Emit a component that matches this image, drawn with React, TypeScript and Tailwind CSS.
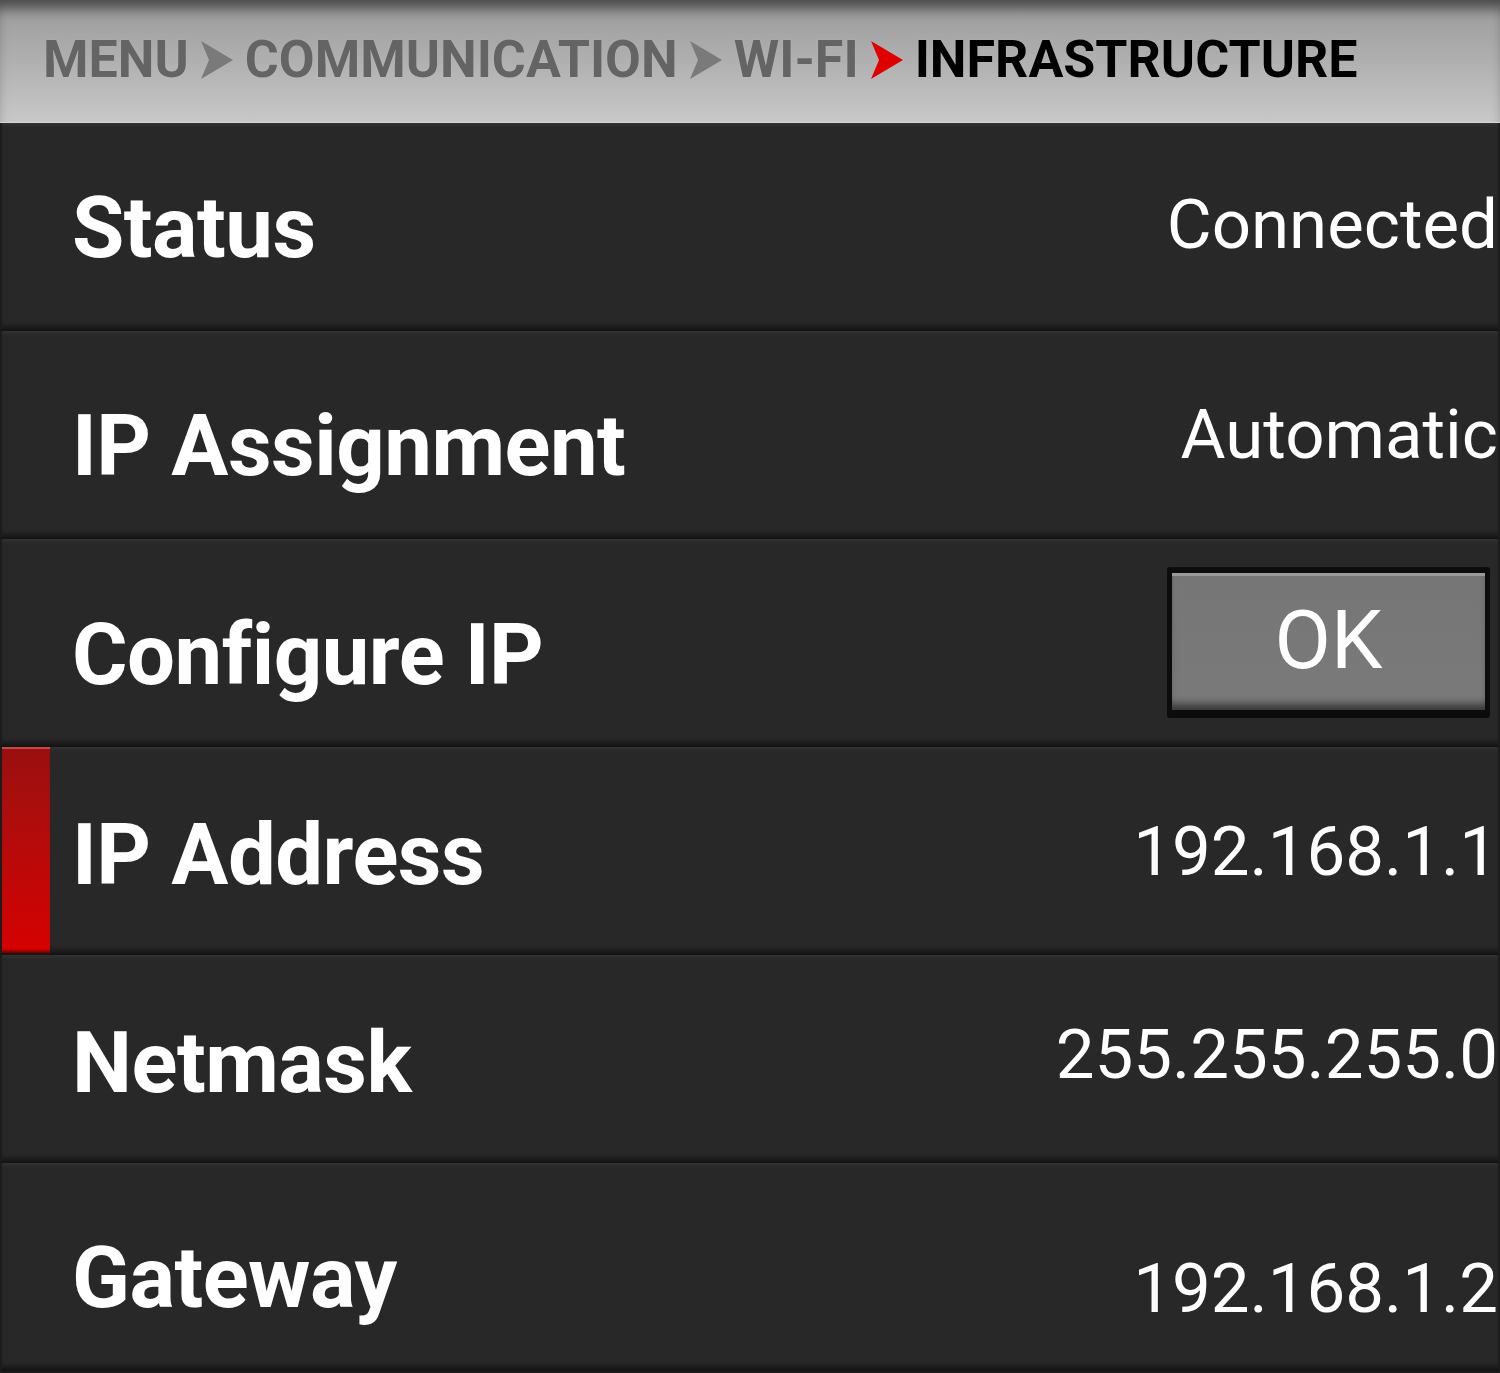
import React from 'react';

interface Row {
  label: string;
  value?: string;
  button?: string;
  selected?: boolean;
  labelShift: string;
  valueShift: string;
}

const rows: Row[] = [
  { label: 'Status', value: 'Connected', labelShift: 'translate-y-[2px]', valueShift: '-translate-y-[2px]' },
  { label: 'IP Assignment', value: 'Automatic', labelShift: 'translate-y-[12px]', valueShift: 'translate-y-[0px]' },
  { label: 'Configure IP', button: 'OK', labelShift: 'translate-y-[13px]', valueShift: 'translate-y-[0px]' },
  { label: 'IP Address', value: '192.168.1.1', selected: true, labelShift: 'translate-y-[5px]', valueShift: 'translate-y-[1px]' },
  { label: 'Netmask', value: '255.255.255.0', labelShift: 'translate-y-[5px]', valueShift: '-translate-y-[4px]' },
  { label: 'Gateway', value: '192.168.1.2', labelShift: 'translate-y-[12px]', valueShift: 'translate-y-[22px]' },
];

const Chevron: React.FC<{ color: string }> = ({ color }) => (
  <svg width="34" height="38" viewBox="0 0 34 38" className="shrink-0">
    <path d="M1 0 L33 19 L1 38 L9 19 Z" fill={color} />
  </svg>
);

const crumbText = "text-[52px] font-bold leading-none [text-shadow:0_0_1px_rgba(255,255,255,0.35)]";

const App: React.FC = () => {
  return (
    <div
      className="w-[1500px] h-[1373px] overflow-hidden bg-[#1a1a1a] flex flex-col"
      style={{ fontFamily: 'Roboto, "Liberation Sans", sans-serif' }}
    >
      {/* breadcrumb bar */}
      <div className="h-[123px] shrink-0 flex items-center gap-[11px] pl-[43px] pb-[2px] bg-gradient-to-b from-[#9a9a9a] via-[#b0b0b0] to-[#c8c8c8] shadow-[inset_0_14px_14px_-6px_rgba(0,0,0,0.55)] border-b border-[#d6d6d6]">
        <span className={`${crumbText} text-[#646464]`}>MENU</span>
        <Chevron color="#7a7a7a" />
        <span className={`${crumbText} text-[#646464]`}>COMMUNICATION</span>
        <Chevron color="#7a7a7a" />
        <span className={`${crumbText} text-[#646464]`}>WI-FI</span>
        <Chevron color="#e00000" />
        <span className={`${crumbText} text-black`}>INFRASTRUCTURE</span>
      </div>

      {/* settings list */}
      <div className="flex flex-col">
        {rows.map((row) => (
          <div
            key={row.label}
            className="h-[208px] shrink-0 flex items-stretch bg-[#282828] border-l-2 border-r-2 border-[#1c1c1c] border-b-2 border-b-[#151515] shadow-[inset_0_5px_4px_-3px_rgba(255,255,255,0.06),inset_0_-6px_5px_-3px_rgba(0,0,0,0.45)]"
          >
            {row.selected ? (
              <div className="w-[48px] shrink-0 bg-gradient-to-b from-[#9a0f0f] to-[#d60000] border-t-2 border-[#c24a4a] shadow-[inset_0_-4px_3px_-2px_rgba(0,0,0,0.5)]" />
            ) : (
              <div className="w-[48px] shrink-0" />
            )}
            <div className="flex-1 flex items-center justify-between pl-[22px] overflow-hidden">
              <span className={`text-[85px] font-bold leading-none text-white tracking-[-0.5px] ${row.labelShift}`}>
                {row.label}
              </span>
              {row.button ? (
                <div className="mr-[8px] w-[323px] h-[151px] bg-[#0c0c0c] rounded-[3px] pt-[6px] px-[5px] pb-[8px] flex">
                  <button className="flex-1 flex items-center justify-center bg-gradient-to-b from-[#767676] to-[#7a7a7a] border-t-[3px] border-[#9a9a9a] shadow-[inset_0_-10px_8px_-4px_rgba(0,0,0,0.55)] text-white text-[82px] leading-none font-normal">
                    <span className="-translate-y-[3px]">{row.button}</span>
                  </button>
                </div>
              ) : (
                <span className={`text-[69px] font-normal leading-none text-white ${row.valueShift}`}>
                  {row.value}
                </span>
              )}
            </div>
          </div>
        ))}
      </div>
    </div>
  );
};

export default App;
